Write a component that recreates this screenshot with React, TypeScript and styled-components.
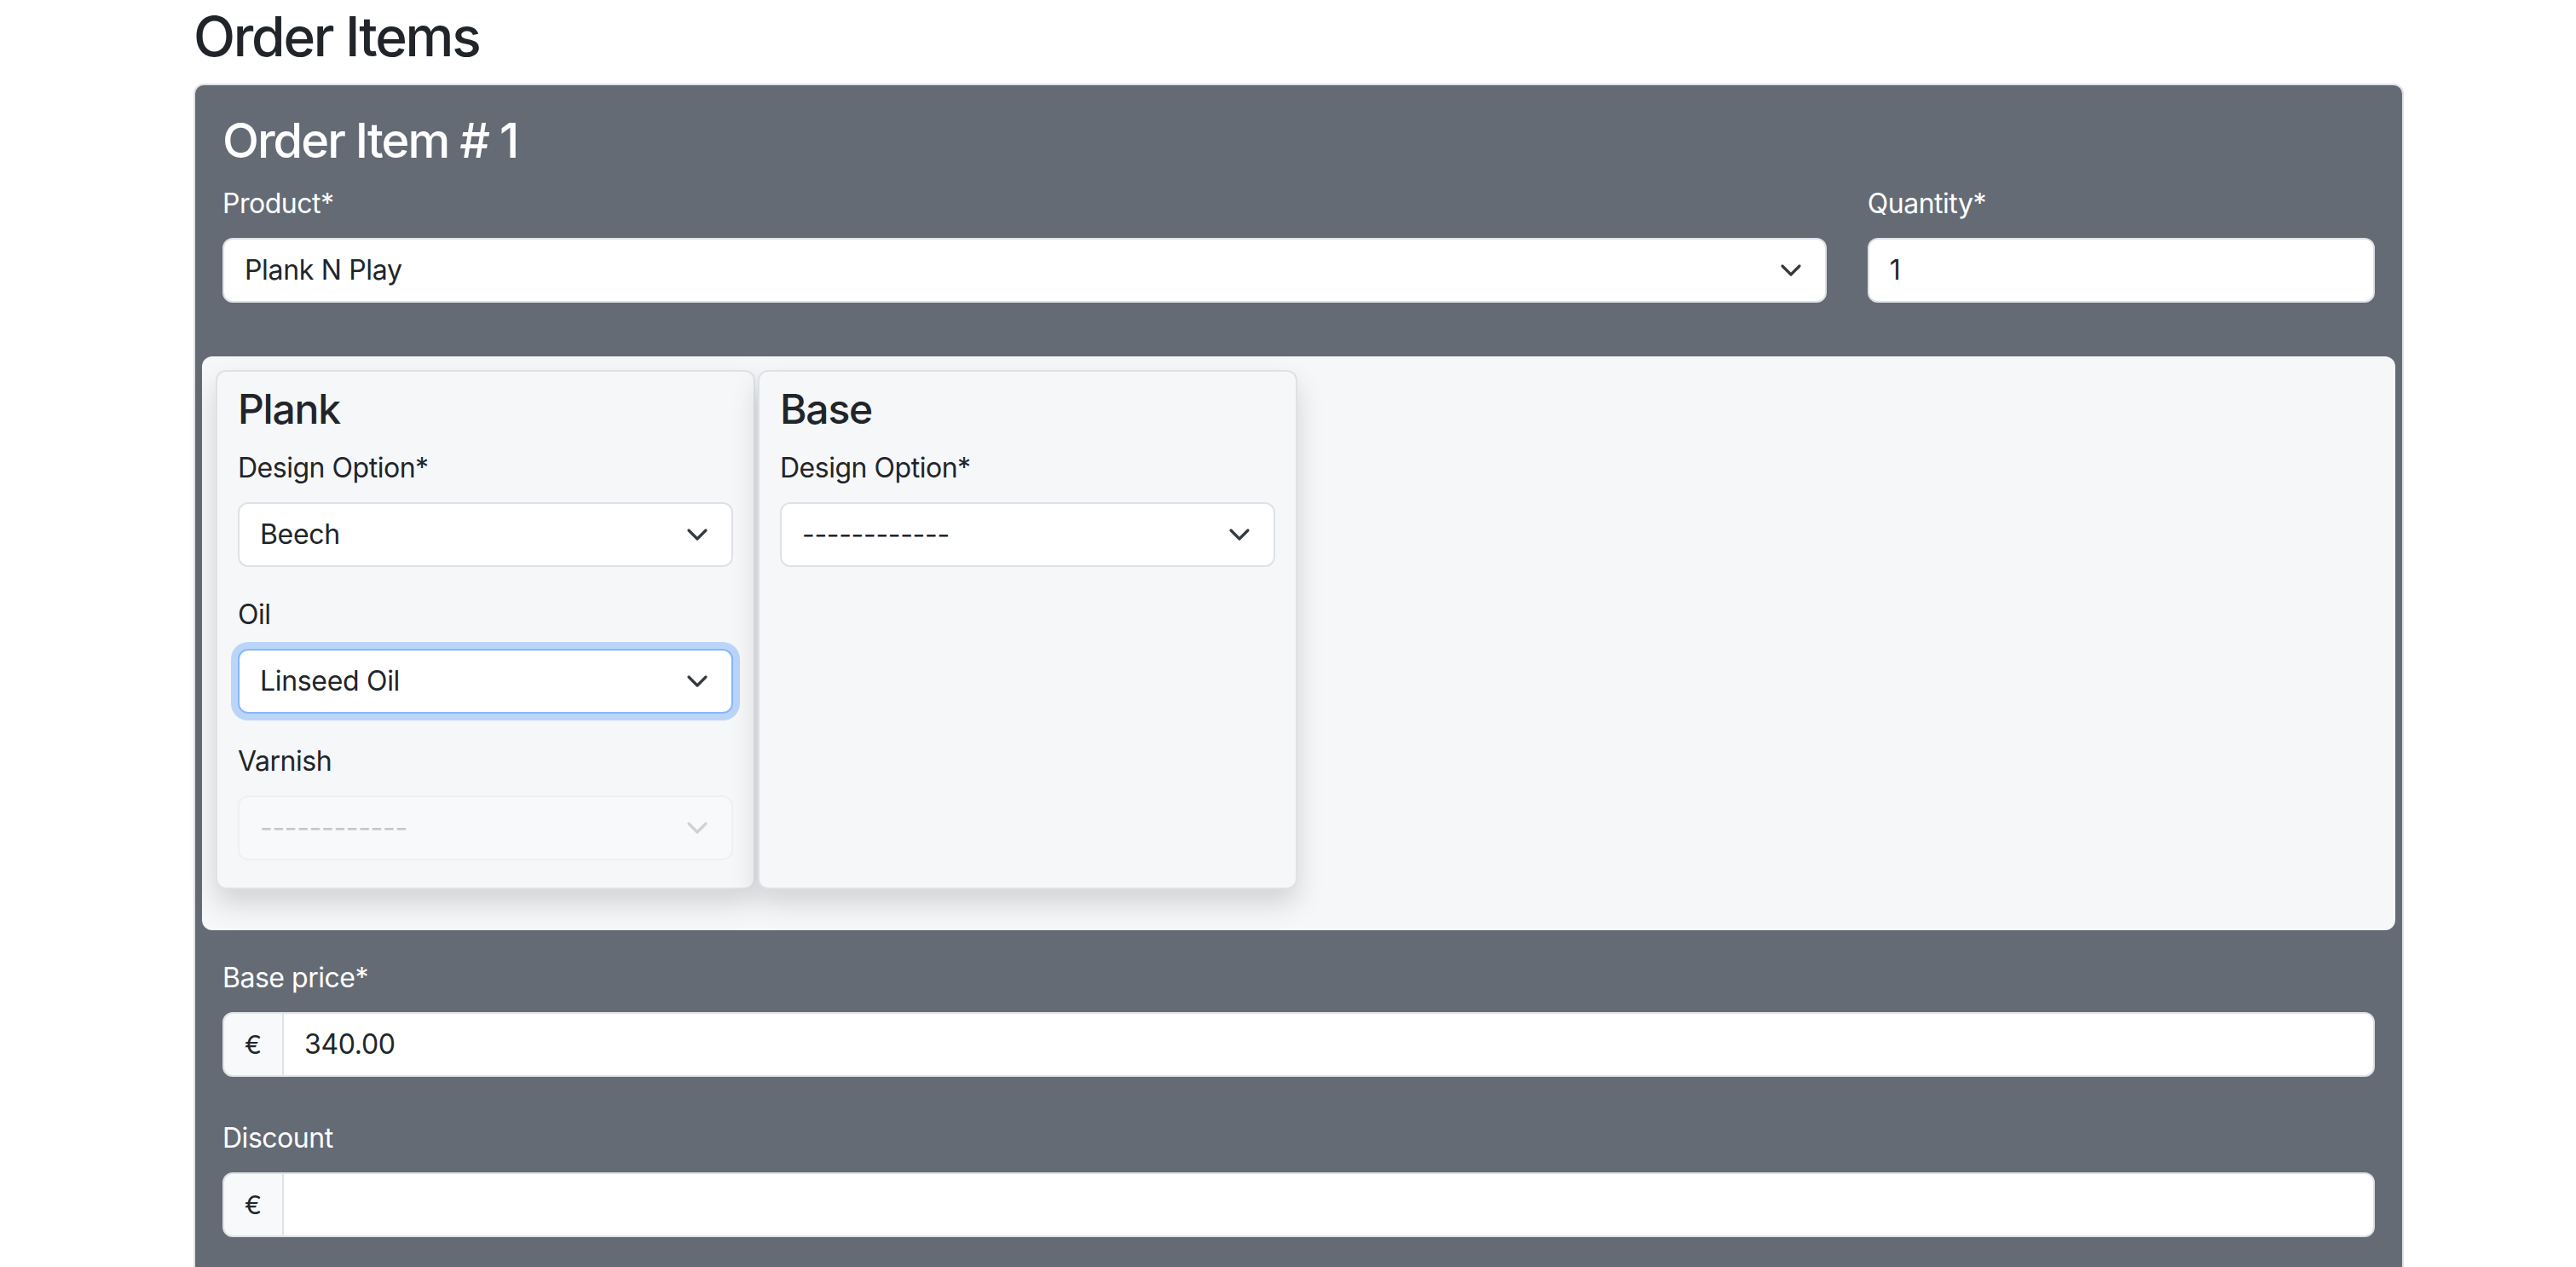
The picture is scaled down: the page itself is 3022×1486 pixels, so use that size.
import React from 'react';
import styled, {createGlobalStyle, css} from 'styled-components';

const GlobalStyle = createGlobalStyle`
  body {
    margin: 0;
    background: #fff;
    color: #212529;
    font-family: Inter, "Liberation Sans", Arial, sans-serif;
  }
`

const Page = styled.div`
  padding-left: 227px;
  width: 2593px;
`

const Title = styled.h2`
  margin: 5px 0 16px;
  font-size: 64px;
  font-weight: 500;
  line-height: 1.2;
  letter-spacing: -0.035em;
`

const ItemCard = styled.div`
  background: #646b75;
  border: 2px solid #dee2e6;
  border-radius: 12px;
  padding: 32px 32px 40px;
  color: #fff;
`

const ItemTitle = styled.h3`
  margin: 0 0 16px;
  font-size: 56px;
  font-weight: 500;
  line-height: 1.2;
  letter-spacing: -0.035em;
`

const TopRow = styled.div`
  display: grid;
  grid-template-columns: calc(75% - 12px) 1fr;
  column-gap: 48px;
  margin-bottom: 63px;
`

const Field = styled.div<{ $gap?: number }>`
  margin-bottom: ${p => p.$gap ?? 0}px;
`

const Label = styled.label`
  display: block;
  margin-bottom: 16px;
  font-size: 32px;
  line-height: 48px;
  letter-spacing: -0.015em;
`

const Box = styled.div<{ $focus?: boolean; $disabled?: boolean }>`
  display: flex;
  align-items: center;
  box-sizing: border-box;
  height: 76px;
  padding: 0 24px;
  background: #fff;
  border: 2px solid #dee2e6;
  border-radius: 12px;
  color: #212529;
  font-size: 32px;
  letter-spacing: -0.01em;

  ${p => p.$focus && css`
    border-color: #86b7fe;
    box-shadow: 0 0 0 8px rgba(13, 110, 253, 0.25);
  `}

  ${p => p.$disabled && css`
    background: #f8f9fa;
    border-color: #eef0f2;
    color: #c4c7ca;
  `}
`

const BoxText = styled.span`
  flex: 1;
  white-space: nowrap;
`

const Chevron = styled.svg<{ $muted?: boolean }>`
  width: 32px;
  height: 24px;
  flex: none;
  color: ${p => p.$muted ? '#cfd2d5' : '#343a40'};
`

const Panel = styled.div`
  display: grid;
  grid-template-columns: repeat(4, 1fr);
  column-gap: 3px;
  margin: 0 -24px 32px;
  padding: 16px 16px 48px;
  background: #f6f7f9;
  border-radius: 12px;
  color: #212529;
`

const PartCard = styled.div`
  background: #f6f7f9;
  border: 2px solid #dee2e6;
  border-radius: 12px;
  padding: 15px 24px 0;
  box-shadow: 0 16px 32px rgba(0, 0, 0, 0.15);
`

const PartTitle = styled.h4`
  margin: 0 0 16px;
  font-size: 48px;
  font-weight: 500;
  line-height: 1.2;
  letter-spacing: -0.025em;
`

const Group = styled.div`
  display: flex;
`

const Addon = styled.span`
  display: flex;
  align-items: center;
  box-sizing: border-box;
  height: 76px;
  padding: 0 24px;
  background: #f8f9fa;
  border: 2px solid #dee2e6;
  border-radius: 12px 0 0 12px;
  color: #212529;
  font-size: 30px;
`

const GroupInput = styled(Box)`
  flex: 1;
  margin-left: -2px;
  border-radius: 0 12px 12px 0;
`

const Select = ({value, focus, disabled}: { value: string; focus?: boolean; disabled?: boolean }) => (
    <Box $focus={focus} $disabled={disabled}>
        <BoxText>{value}</BoxText>
        <Chevron $muted={disabled} viewBox="0 0 16 12" fill="none">
            <path d="m3 3.5 5 5 5-5" stroke="currentColor" strokeWidth="1.6" strokeLinecap="round" strokeLinejoin="round"/>
        </Chevron>
    </Box>
)

const App = () => {
    return (
        <Page>
            <GlobalStyle/>
            <Title>Order Items</Title>
            <ItemCard>
                <ItemTitle>Order Item # 1</ItemTitle>
                <TopRow>
                    <Field>
                        <Label>Product*</Label>
                        <Select value="Plank N Play"/>
                    </Field>
                    <Field>
                        <Label>Quantity*</Label>
                        <Box>1</Box>
                    </Field>
                </TopRow>

                <Panel>
                    <PartCard>
                        <PartTitle>Plank</PartTitle>
                        <Field $gap={32}>
                            <Label>Design Option*</Label>
                            <Select value="Beech"/>
                        </Field>
                        <Field $gap={32}>
                            <Label>Oil</Label>
                            <Select value="Linseed Oil" focus/>
                        </Field>
                        <Field $gap={32}>
                            <Label>Varnish</Label>
                            <Select value="------------" disabled/>
                        </Field>
                    </PartCard>
                    <PartCard>
                        <PartTitle>Base</PartTitle>
                        <Field $gap={32}>
                            <Label>Design Option*</Label>
                            <Select value="------------"/>
                        </Field>
                    </PartCard>
                </Panel>

                <Field $gap={48}>
                    <Label>Base price*</Label>
                    <Group>
                        <Addon>€</Addon>
                        <GroupInput>340.00</GroupInput>
                    </Group>
                </Field>
                <Field $gap={48}>
                    <Label>Discount</Label>
                    <Group>
                        <Addon>€</Addon>
                        <GroupInput/>
                    </Group>
                </Field>
            </ItemCard>
        </Page>
    );
};

export default App;
